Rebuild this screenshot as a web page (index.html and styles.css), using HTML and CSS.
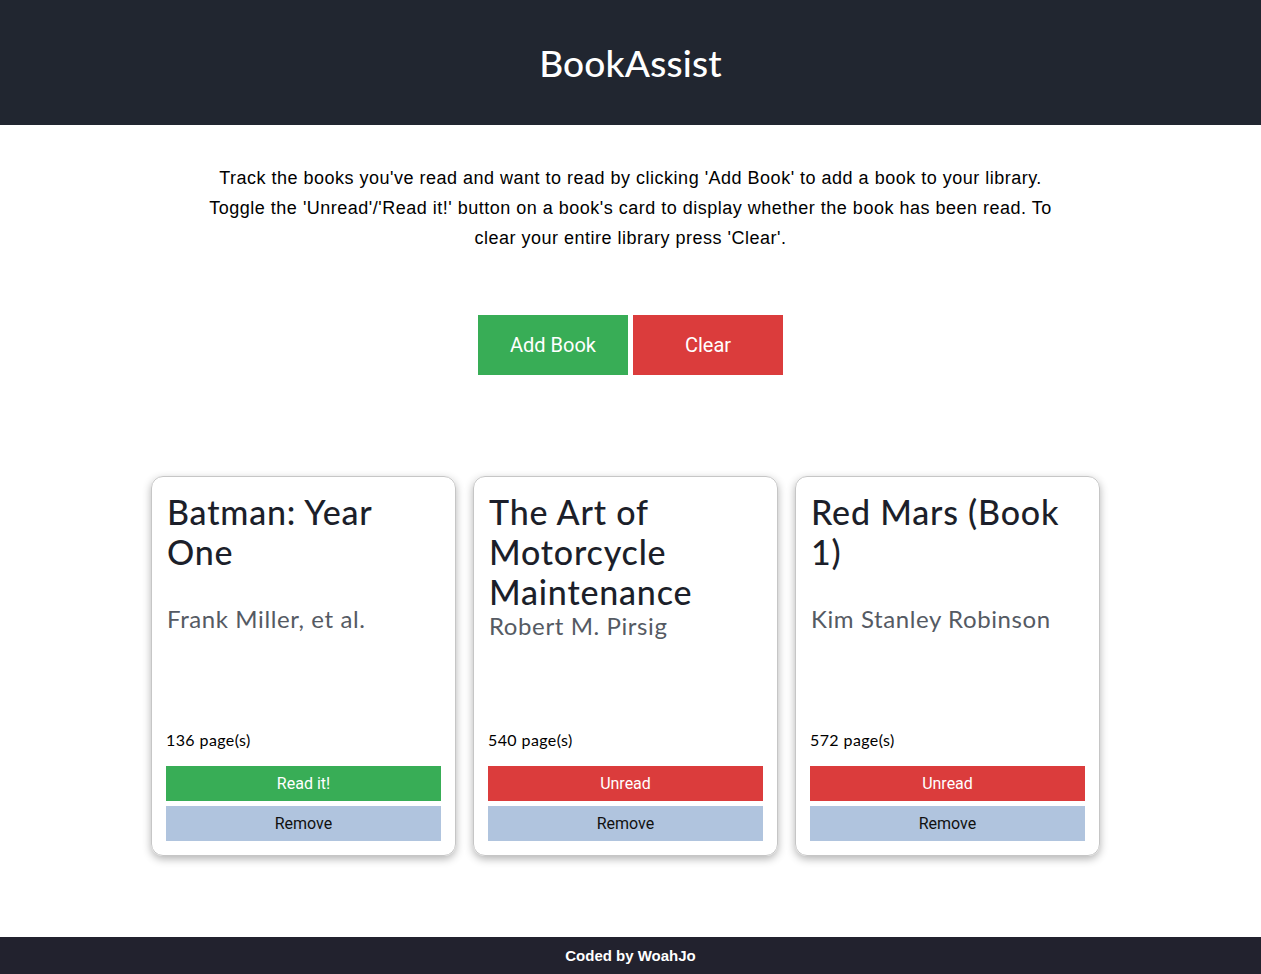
FILE: index.html
```html
<!DOCTYPE html>
<html lang="en">
<head>
<meta charset="utf-8">
<title>BookAssist</title>
<link rel="stylesheet" href="styles.css">
</head>
<body>
<header class="site-header">
  <h1 class="site-title">BookAssist</h1>
</header>
<main class="main">
  <p class="intro">Track the books you've read and want to read by clicking 'Add Book' to add a book to your library. Toggle the 'Unread'/'Read it!' button on a book's card to display whether the book has been read. To clear your entire library press 'Clear'.</p>
  <div class="actions">
    <button class="btn btn-add">Add Book</button>
    <button class="btn btn-clear">Clear</button>
  </div>
  <section class="library">
    <article class="card">
      <h2 class="card-title">Batman: Year One</h2>
      <p class="card-author">Frank Miller, et al.</p>
      <div class="card-bottom">
        <p class="card-pages">136 page(s)</p>
        <button class="card-btn status-read">Read it!</button>
        <button class="card-btn remove">Remove</button>
      </div>
    </article>
    <article class="card">
      <h2 class="card-title">The Art of Motorcycle Maintenance</h2>
      <p class="card-author">Robert M. Pirsig</p>
      <div class="card-bottom">
        <p class="card-pages">540 page(s)</p>
        <button class="card-btn status-unread">Unread</button>
        <button class="card-btn remove">Remove</button>
      </div>
    </article>
    <article class="card">
      <h2 class="card-title">Red Mars (Book 1)</h2>
      <p class="card-author">Kim Stanley Robinson</p>
      <div class="card-bottom">
        <p class="card-pages">572 page(s)</p>
        <button class="card-btn status-unread">Unread</button>
        <button class="card-btn remove">Remove</button>
      </div>
    </article>
  </section>
</main>
<footer class="site-footer">Coded by WoahJo</footer>
</body>
</html>
```

FILE: styles.css
```css
* {
  box-sizing: border-box;
}

html, body {
  margin: 0;
  padding: 0;
}

body {
  min-height: 100vh;
  display: flex;
  flex-direction: column;
  background: #ffffff;
  font-family: "Liberation Sans", Arial, sans-serif;
  color: #000;
}

.site-header {
  height: 125px;
  background: #212630;
  display: flex;
  align-items: center;
  justify-content: center;
}

.site-title {
  margin: 0;
  font-family: Lato, "Noto Sans", sans-serif;
  font-weight: 500;
  font-size: 37px;
  color: #ffffff;
  letter-spacing: 0.2px;
}

.main {
  display: flex;
  flex-direction: column;
  align-items: center;
}

.intro {
  width: 870px;
  margin: 38px 0 0;
  font-size: 18px;
  line-height: 30px;
  letter-spacing: 0.5px;
  text-align: center;
  color: #000;
}

.actions {
  display: flex;
  gap: 5px;
  margin-top: 62px;
}

.btn {
  width: 150px;
  height: 60px;
  border: none;
  border-radius: 0;
  color: #fff;
  font-family: Roboto, "Liberation Sans", sans-serif;
  font-size: 20px;
  cursor: pointer;
}

.btn-add {
  background: #38ad56;
}

.btn-clear {
  background: #db3c3c;
}

.library {
  width: 959px;
  margin-top: 101px;
  display: grid;
  grid-template-columns: repeat(3, 305px);
  gap: 17px;
}

.card {
  height: 380px;
  border: 1px solid #c6c6c6;
  border-radius: 12px;
  padding: 15px 14px 14px;
  display: flex;
  flex-direction: column;
  box-shadow: 0 3px 8px rgba(0, 0, 0, 0.3);
  font-family: Lato, "Noto Sans", sans-serif;
}

.card-title {
  margin: 0;
  min-height: 113px;
  padding-left: 1px;
  font-size: 34px;
  line-height: 40px;
  font-weight: 500;
  letter-spacing: 0.8px;
  color: #1c1f2a;
}

.card-author {
  margin: 0;
  padding-left: 1px;
  font-size: 24px;
  line-height: 28px;
  letter-spacing: 0.6px;
  color: #555a63;
}

.card-bottom {
  margin-top: auto;
  display: flex;
  flex-direction: column;
  gap: 5px;
}

.card-pages {
  margin: 0 0 11px;
  font-size: 16px;
  line-height: 20px;
  letter-spacing: 0.4px;
  color: #000;
}

.card-btn {
  height: 35px;
  border: none;
  border-radius: 0;
  font-family: Roboto, "Liberation Sans", sans-serif;
  font-size: 16px;
  cursor: pointer;
}

.status-read {
  background: #38ad56;
  color: #fff;
}

.status-unread {
  background: #db3c3c;
  color: #fff;
}

.remove {
  background: #b0c4de;
  color: #111;
}

.site-footer {
  margin-top: auto;
  height: 37px;
  background: #22222e;
  color: #fff;
  font-weight: bold;
  font-size: 15px;
  display: flex;
  align-items: center;
  justify-content: center;
}
```
